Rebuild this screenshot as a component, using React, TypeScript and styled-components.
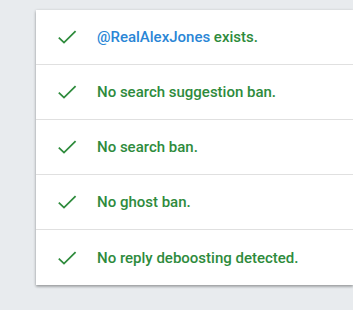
import React from 'react';
import styled, { createGlobalStyle } from 'styled-components';

const GlobalStyle = createGlobalStyle`
  html, body {
    margin: 0;
    padding: 0;
    background: #e8ebee;
    font-family: Roboto, "Liberation Sans", sans-serif;
    overflow: hidden;
  }
`;

type Result = { handle?: string; text: string };

const results: Result[] = [
  { handle: '@RealAlexJones', text: ' exists.' },
  { text: 'No search suggestion ban.' },
  { text: 'No search ban.' },
  { text: 'No ghost ban.' },
  { text: 'No reply deboosting detected.' },
];

const CheckIcon = () => (
  <svg width="24" height="24" viewBox="0 0 24 24">
    <path d="M3.8 12.6 L9 17.6 L20.6 6.2" fill="none" stroke="#2e8b3c" strokeWidth="1.8" />
  </svg>
);

const App = () => (
  <Page>
    <GlobalStyle />
    <Card>
      {results.map((r, i) => (
        <Row key={i} last={i === results.length - 1}>
          <IconBox>
            <CheckIcon />
          </IconBox>
          <Message>
            {r.handle && <Handle>{r.handle}</Handle>}
            {r.text}
          </Message>
        </Row>
      ))}
    </Card>
  </Page>
);

export default App;

const Page = styled.div`
  width: 353px;
  height: 310px;
  padding: 10px 0 0 36px;
  box-sizing: border-box;
`;

const Card = styled.div`
  width: 317px;
  background: #fff;
  box-shadow: 0 1px 3px rgba(0, 0, 0, 0.3), 0 2px 2px rgba(0, 0, 0, 0.12);
`;

const Row = styled.div.withConfig({
  shouldForwardProp: (prop) => prop !== 'last',
})<{ last: boolean }>`
  display: flex;
  align-items: center;
  height: 55px;
  box-sizing: border-box;
  padding-left: 19px;
  border-bottom: ${({ last }) => (last ? 'none' : '1px solid #e0e0e0')};
`;

const IconBox = styled.div`
  width: 24px;
  height: 24px;
  margin-right: 18px;
  display: flex;
`;

const Message = styled.span`
  font-size: 15px;
  font-weight: 500;
  color: #2e8b3c;
  white-space: nowrap;
`;

const Handle = styled.span`
  color: #2a86d6;
`;
